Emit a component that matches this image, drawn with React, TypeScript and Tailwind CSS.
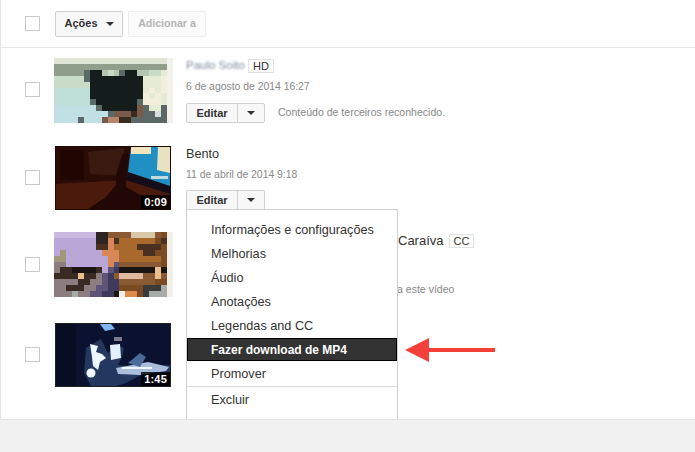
import type { ReactNode } from "react";

function Caret() {
  return <span className="inline-block w-0 h-0 border-x-[4px] border-x-transparent border-t-[4px] border-t-[#333]" />;
}

function Checkbox({ top }: { top: string }) {
  return <div className={`w-[15px] h-[15px] border border-[#c9c9c9] bg-white shrink-0 ${top}`} />;
}

function EditButtons({ open = false }: { open?: boolean }) {
  return (
    <div className={`flex w-[79px] border border-[#d0d0d0] bg-[#f8f8f8] text-[11px] font-bold text-[#333] ${open ? "rounded-t-[2px] border-b-0 h-[19px]" : "rounded-[2px] h-[20px]"}`}>
      <div className="w-[51px] flex items-center justify-center border-r border-[#d0d0d0]">Editar</div>
      <div className="flex-1 flex items-center justify-center"><Caret /></div>
    </div>
  );
}

function Badge({ children }: { children: ReactNode }) {
  return <span className="inline-flex items-center justify-center h-[14px] px-[4px] border border-[#e2e2e2] text-[11px] leading-none text-[#333]">{children}</span>;
}

function Duration({ children }: { children: ReactNode }) {
  return <span className="absolute right-[1px] bottom-[1px] bg-black/80 text-white text-[11px] font-bold leading-[14px] px-[3px] tracking-[0.2px]">{children}</span>;
}

// mosaic thumbnails, one letter per block
function Mosaic({ rows, palette }: { rows: string[]; palette: Record<string, string> }) {
  return (
    <svg viewBox="0 0 120 66" preserveAspectRatio="none" className="w-[119px] h-[65px] block blur-[0.7px]" shapeRendering="crispEdges">
      {rows.map((row, y) =>
        row.split("").map((c, x) => <rect key={`${x}-${y}`} x={x * 6} y={y * 6} width="6" height="6" fill={palette[c]} />)
      )}
    </svg>
  );
}

const facePalette: Record<string, string> = {
  a: "#dfe6d6", b: "#8f9f8c", c: "#b4c6b0", d: "#c8dcc8", e: "#bfe0d8", f: "#e6ecd4", g: "#f2f0dc",
  h: "#141d1c", i: "#5a6a66", j: "#c0e0e4", k: "#7a5a4a", l: "#b8866a", m: "#5b6866", n: "#d8dcda", o: "#3a2a20", p: "#f2f2ea",
};

const faceRows = [
  "aaaaaaaaaaaaaaaaaaap",
  "bbbbbbbbbbbbbbbbbbbp",
  "bbbbbihhcdcihhccddfp",
  "dddddihhhhhhhhhfffgp",
  "ddddddhhhhhhhhhfffgp",
  "eeeeeehhhhhhhhhfgfgp",
  "eeeeeehhhhhhhhhgfgfp",
  "eeeeeeihhhhhhhigggfp",
  "jjjjjjjihhhhhhkiffmp",
  "jjjjjjjjjikkkokmmnmp",
  "jjjjmjjjklloommmmmmp",
];

const manPalette: Record<string, string> = {
  a: "#bba6d8", b: "#cbb8e0", c: "#2e2422", d: "#a9682c", e: "#7a4a22", f: "#d88858", g: "#4a3020", h: "#a09878",
  i: "#3a2a24", j: "#ecc08c", k: "#5d5478", l: "#3f3a5c", m: "#e0b8a0", n: "#1a1412", o: "#8a5a34", p: "#f2eee8",
  q: "#3a3a38", r: "#a8aca8", s: "#e08a4a", t: "#8b7d80", u: "#d8c8a8",
};

const manRows = [
  "bbbbbbbccoooouuuuoep",
  "aaaaaaaccfgddddddegp",
  "aaaaaaaggfddddggggep",
  "ahaaaaaafffddddggeep",
  "hhaaaaaaaffdddddddep",
  "ttaaaaaaafkoooooooep",
  "tiinnnniaklnnnnnnjnp",
  "iiiijiitklommmmoojop",
  "ttttiittkllooooooeep",
  "ttiiittkklleeeeqqqrp",
  "tttrttkkllnpsseqrrrp",
];

function ThumbBento() {
  return (
    <div className="w-[116px] h-[64px] overflow-hidden border border-[#1c0a06] bg-[#2a0b06]">
      <svg viewBox="0 0 114 62" className="w-[114px] h-[62px] block blur-[0.7px]">
        <rect width="114" height="62" fill="#3a110a" />
        <polygon points="0,0 75,0 70,33 0,37" fill="#2a0b06" />
        <polygon points="32,5 68,1 66,29 34,27" fill="#3a1a10" />
        <rect x="4" y="3" width="24" height="30" fill="#1f0603" />
        <polygon points="0,37 70,33 114,46 114,62 0,62" fill="#4a1b0d" />
        <polygon points="32,62 50,50 60,38 60,28 66,8 72,6 70,40 88,50 92,62" fill="#210705" />
        <polygon points="72,25 114,39 114,47 70,33" fill="#140c18" />
        <polygon points="75,0 114,0 114,39 72,25" fill="#1f8fc4" />
        <rect x="75" y="0" width="20" height="7" fill="#f0e4bc" />
        <polygon points="102,0 114,0 114,26 101,23" fill="#e8e2c0" />
        <rect x="95" y="29" width="17" height="3" fill="#c4d8e0" />
      </svg>
    </div>
  );
}

function ThumbGuitar() {
  return (
    <div className="w-[116px] h-[64px] overflow-hidden border border-[#222] bg-[#070d22]">
      <svg viewBox="0 0 114 62" className="w-[114px] h-[62px] block blur-[0.5px]">
        <rect width="114" height="62" fill="#0a1230" />
        <rect width="20" height="62" fill="#070d22" />
        <polygon points="44,0 55,0 59,5 49,7" fill="#7fb4ee" />
        <polygon points="30,24 45,15 52,29 62,21 68,24 66,33 62,41 80,43 114,41 114,49 85,51 70,59 60,62 35,62 28,49" fill="#24385f" />
        <polygon points="34,20 42,22 40,28 46,30 50,34 44,38 42,46 37,42 36,33" fill="#eef6ff" />
        <polygon points="54,21 64,20 65,34 55,36" fill="#e4f0ff" />
        <circle cx="35" cy="49" r="4.5" fill="#f2f8ff" />
        <polygon points="60,44 92,38 113,43 110,47 84,51 62,50" fill="#a8bedc" />
        <rect x="66" y="43" width="30" height="2" fill="#f0f6ff" />
        <polygon points="72,39 84,29 90,33 84,43" fill="#4a6a98" />
        <rect x="58" y="13" width="8" height="4" fill="#7a7a90" />
      </svg>
    </div>
  );
}

const menuItems = ["Informações e configurações", "Melhorias", "Áudio", "Anotações", "Legendas and CC"];

function Menu() {
  return (
    <div className="absolute left-[186px] top-[209px] w-[212px] h-[210px] bg-white border border-[#d0d0d0] border-b-0 pt-[8px] text-[12.7px] text-[#333]">
      {menuItems.map((item) => (
        <div key={item} className="h-[24px] leading-[24px] pl-[24px]">{item}</div>
      ))}
      <div className="h-[23px] leading-[23px] pl-[23px] bg-[#333] text-white text-[12px] font-bold border border-black">Fazer download de MP4</div>
      <div className="h-[24px] leading-[26px] pl-[24px]">Promover</div>
      <div className="border-t border-[#d8d8d8] mt-[1px] h-[26px] leading-[26px] pl-[24px]">Excluir</div>
    </div>
  );
}

export default function App() {
  return (
    <div className="relative w-[695px] h-[452px] overflow-hidden bg-[#f1f1f1] font-['Liberation_Sans',Arial,sans-serif]">
      <div className="h-[420px] bg-white border-l border-b border-[#e4e4e4]">
        {/* toolbar */}
        <div className="h-[48px] border-b border-[#e8e8e8] flex items-center pl-[24px]">
          <Checkbox top="" />
          <div className="ml-[15px] w-[68px] h-[26px] flex items-center justify-center gap-[8px] border border-[#cfcfcf] rounded-[2px] bg-[#f8f8f8] text-[11px] font-bold text-[#333]">
            Ações <Caret />
          </div>
          <div className="ml-[5px] w-[78px] h-[26px] flex items-center justify-center border border-[#ececec] rounded-[2px] bg-[#fbfbfb] text-[10.6px] font-bold text-[#b5b5b5]">
            Adicionar a
          </div>
        </div>

        {/* row 1 */}
        <div className="h-[86px] flex items-start pl-[24px]">
          <Checkbox top="mt-[34px]" />
          <div className="ml-[14px] mt-[10px] w-[119px] shrink-0 overflow-hidden"><Mosaic rows={faceRows} palette={facePalette} /></div>
          <div className="ml-[13px] mt-[11px] flex flex-col">
            <div className="flex items-center h-[14px] gap-[4px]">
              <span className="text-[11.5px] text-[#7f8a9c] blur-[1.2px] w-[58px] whitespace-nowrap">Paulo Soito</span>
              <Badge>HD</Badge>
            </div>
            <div className="mt-[7px] h-[14px] leading-[14px] text-[10.4px] text-[#888]">6 de agosto de 2014 16:27</div>
            <div className="mt-[9px] flex items-center">
              <EditButtons />
              <span className="ml-[13px] text-[10.55px] text-[#888]">Conteúdo de terceiros reconhecido.</span>
            </div>
          </div>
        </div>

        {/* row 2 */}
        <div className="h-[88px] flex items-start pl-[24px]">
          <Checkbox top="mt-[36px]" />
          <div className="relative ml-[15px] mt-[12px] w-[116px] shrink-0">
            <ThumbBento />
            <Duration>0:09</Duration>
          </div>
          <div className="ml-[15px] mt-[12px] flex flex-col">
            <div className="h-[16px] leading-[16px] text-[12.7px] text-[#333]">Bento</div>
            <div className="mt-[6px] h-[14px] leading-[14px] text-[10.4px] text-[#888]">11 de abril de 2014 9:18</div>
            <div className="mt-[8px]"><EditButtons open /></div>
          </div>
        </div>

        {/* row 3 */}
        <div className="h-[86px] flex items-start pl-[24px]">
          <Checkbox top="mt-[35px]" />
          <div className="ml-[14px] mt-[10px] w-[119px] shrink-0 overflow-hidden"><Mosaic rows={manRows} palette={manPalette} /></div>
          <div className="ml-[225px] mt-[11px] flex flex-col">
            <div className="flex items-center h-[16px] gap-[5px] text-[13px] text-[#333]">
              Caraíva <Badge>CC</Badge>
            </div>
            <div className="mt-[33px] -ml-[1px] text-[10.55px] text-[#888]">a este vídeo</div>
          </div>
        </div>

        {/* row 4 */}
        <div className="h-[92px] flex items-start pl-[24px]">
          <Checkbox top="mt-[39px]" />
          <div className="relative ml-[15px] mt-[15px] w-[116px] shrink-0">
            <ThumbGuitar />
            <Duration>1:45</Duration>
          </div>
        </div>
      </div>

      <Menu />

      {/* red arrow */}
      <svg className="absolute left-[404px] top-[337px]" width="92" height="26" viewBox="0 0 92 26">
        <polygon points="1,13 25,1 25,11 91,11 91,15 25,15 25,25" fill="#f4403a" />
      </svg>
    </div>
  );
}
